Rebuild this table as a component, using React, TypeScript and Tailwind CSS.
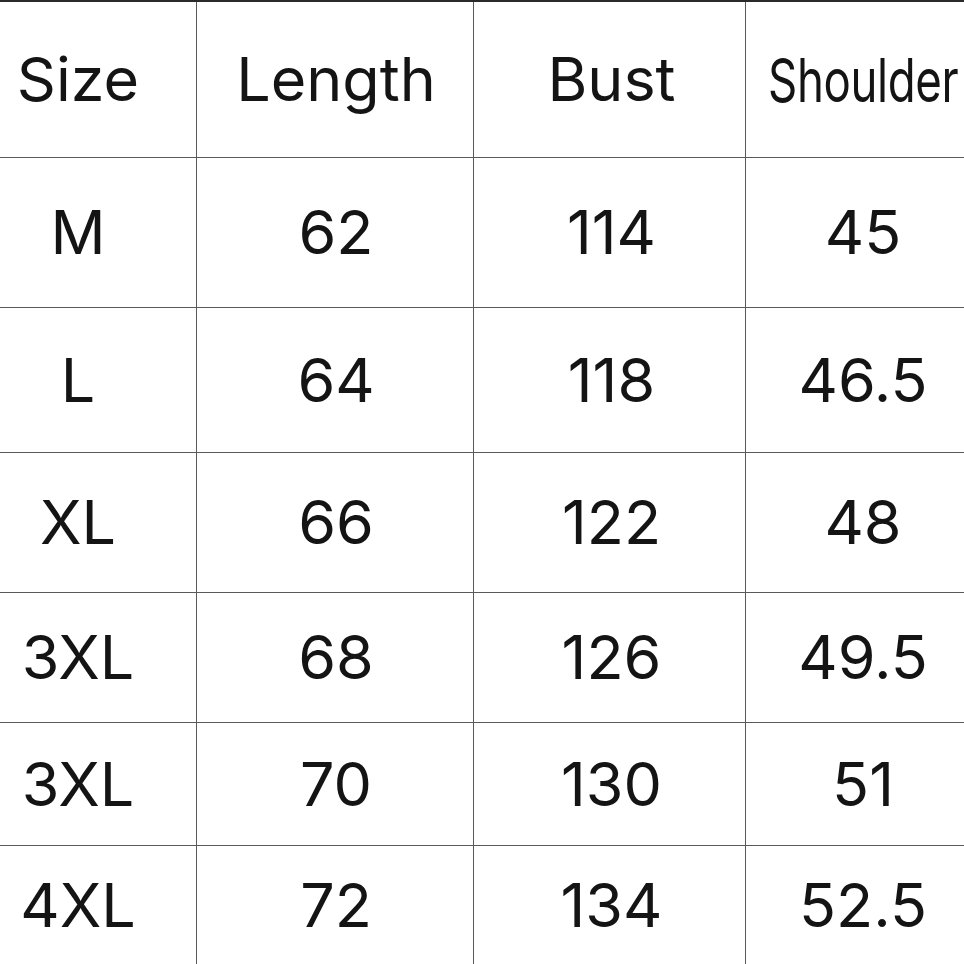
import React from "react";

const header = ["Size", "Length", "Bust", "Shoulder"];
const rows = [
  ["M", "62", "114", "45"],
  ["L", "64", "118", "46.5"],
  ["XL", "66", "122", "48"],
  ["3XL", "68", "126", "49.5"],
  ["3XL", "70", "130", "51"],
  ["4XL", "72", "134", "52.5"],
];

const colPad = ["pr-[40px]", "pl-[2px]", "pl-[4px]", "pl-[16px]"];

export default function App() {
  const all = [header, ...rows];
  return (
    <div
      className="w-[964px] h-[964px] bg-white text-[#141414] border-t-2 border-[#2a2a2a] overflow-hidden"
      style={{ fontFamily: "Inter, 'Liberation Sans', sans-serif" }}
    >
      <div className="grid grid-cols-[197px_277px_272px_218px] grid-rows-[156px_150px_145px_140px_130px_123px_118px] h-full">
        {all.map((r, ri) =>
          r.map((c, ci) => (
            <div
              key={ri + "-" + ci}
              className={
                "flex items-center justify-center border-[#5a5a5a] " +
                (ci < 3 ? "border-r-[1.5px] " : "") +
                (ri < 6 ? "border-b-[1.5px] " : "") +
                colPad[ci]
              }
            >
              {ri === 0 && ci === 3 ? (
                <span className="text-[60px] leading-none inline-block scale-x-[0.76] tracking-[-0.5px] whitespace-nowrap">
                  {c}
                </span>
              ) : (
                <span className="text-[61px] leading-none whitespace-nowrap">{c}</span>
              )}
            </div>
          ))
        )}
      </div>
    </div>
  );
}
